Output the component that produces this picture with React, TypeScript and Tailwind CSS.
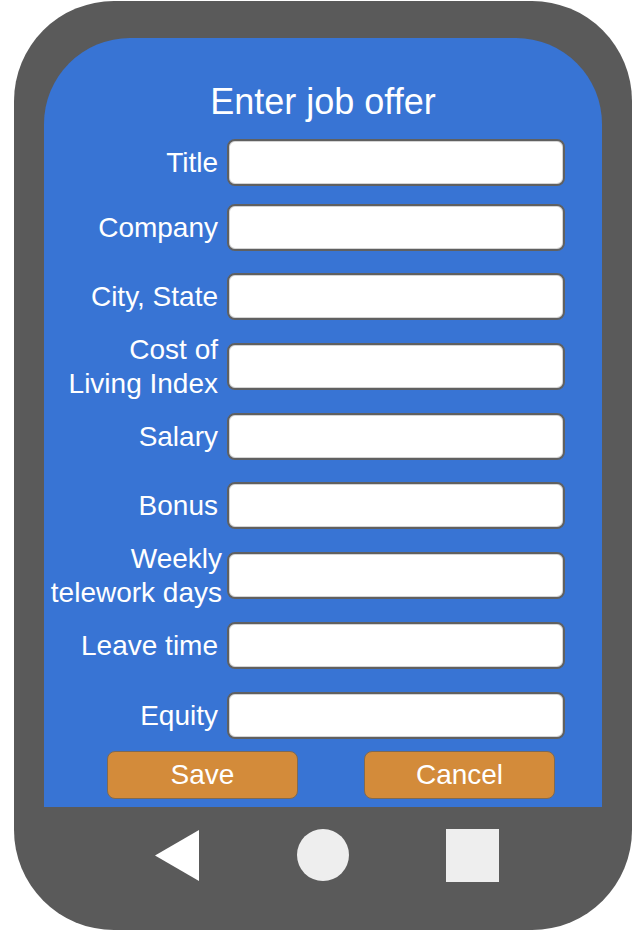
import React from 'react';

interface Field {
    label: string[];
    top: number;
}

// row tops measured in the mock, relative to the previous row's bottom
const fields: Field[] = [
    { label: ['Title'], top: 19 },
    { label: ['Company'], top: 18 },
    { label: ['City, State'], top: 22 },
    { label: ['Cost of', 'Living Index'], top: 23 },
    { label: ['Salary'], top: 23 },
    { label: ['Bonus'], top: 22 },
    { label: ['Weekly', 'telework days'], top: 23 },
    { label: ['Leave time'], top: 23 },
    { label: ['Equity'], top: 23 },
];

const mtClass: Record<number, string> = {
    18: 'mt-[18px]',
    19: 'mt-[19px]',
    22: 'mt-[22px]',
    23: 'mt-[23px]',
};

const FormRow: React.FC<{ field: Field }> = ({ field }) => {
    const wide = field.label.some((l) => l.length > 12);
    return (
        <div className={`flex h-[47px] shrink-0 items-center ${mtClass[field.top]}`}>
            <div
                className={`flex h-[47px] shrink-0 flex-col items-end justify-center text-[28px] leading-[34px] text-white ${wide ? 'w-[178px]' : 'w-[174px]'}`}
            >
                {field.label.map((line) => (
                    <div key={line} className="whitespace-nowrap">
                        {line}
                    </div>
                ))}
            </div>
            <div
                className={`${wide ? 'ml-[5px]' : 'ml-[9px]'} h-[47px] w-[338px] rounded-[8px] border-2 border-[#606060] bg-white shadow-[inset_0_0_0_1px_#d4d4d4]`}
            />
        </div>
    );
};

const Button: React.FC<{ label: string }> = ({ label }) => (
    <button className="h-[48px] w-[191px] rounded-[8px] border-[1.5px] border-[#7d6a55] bg-[#d38b3a] text-[28px] leading-none text-white">
        {label}
    </button>
);

export default function App() {
    return (
        <div
            className="h-[936px] w-[636px] bg-white pl-[14px] pt-[1px]"
            style={{ fontFamily: '"Liberation Sans", Arial, sans-serif' }}
        >
            <div className="flex h-[929px] w-[618px] flex-col rounded-[100px] bg-[#5a5a5a] px-[30px] pt-[37px]">
                {/* Screen */}
                <div className="flex h-[769px] w-[558px] shrink-0 flex-col rounded-t-[86px] bg-[#3874d4]">
                    <h1 className="pt-[46px] text-center text-[36px] leading-[36px] text-white">
                        Enter job offer
                    </h1>
                    {fields.map((f) => (
                        <FormRow key={f.label.join(' ')} field={f} />
                    ))}
                    <div className="mt-[12px] flex">
                        <div className="ml-[63px]">
                            <Button label="Save" />
                        </div>
                        <div className="ml-[66px]">
                            <Button label="Cancel" />
                        </div>
                    </div>
                </div>

                {/* Nav bar */}
                <div className="flex h-[96px] items-center">
                    <svg width="44" height="51" viewBox="0 0 44 51" className="ml-[111px]">
                        <polygon points="44,0 44,51 0,25.5" fill="#ffffff" />
                    </svg>
                    <div className="ml-[98px] h-[52px] w-[52px] rounded-full bg-[#eeeeee]" />
                    <div className="ml-[97px] h-[53px] w-[53px] bg-[#eeeeee]" />
                </div>
            </div>
        </div>
    );
}
